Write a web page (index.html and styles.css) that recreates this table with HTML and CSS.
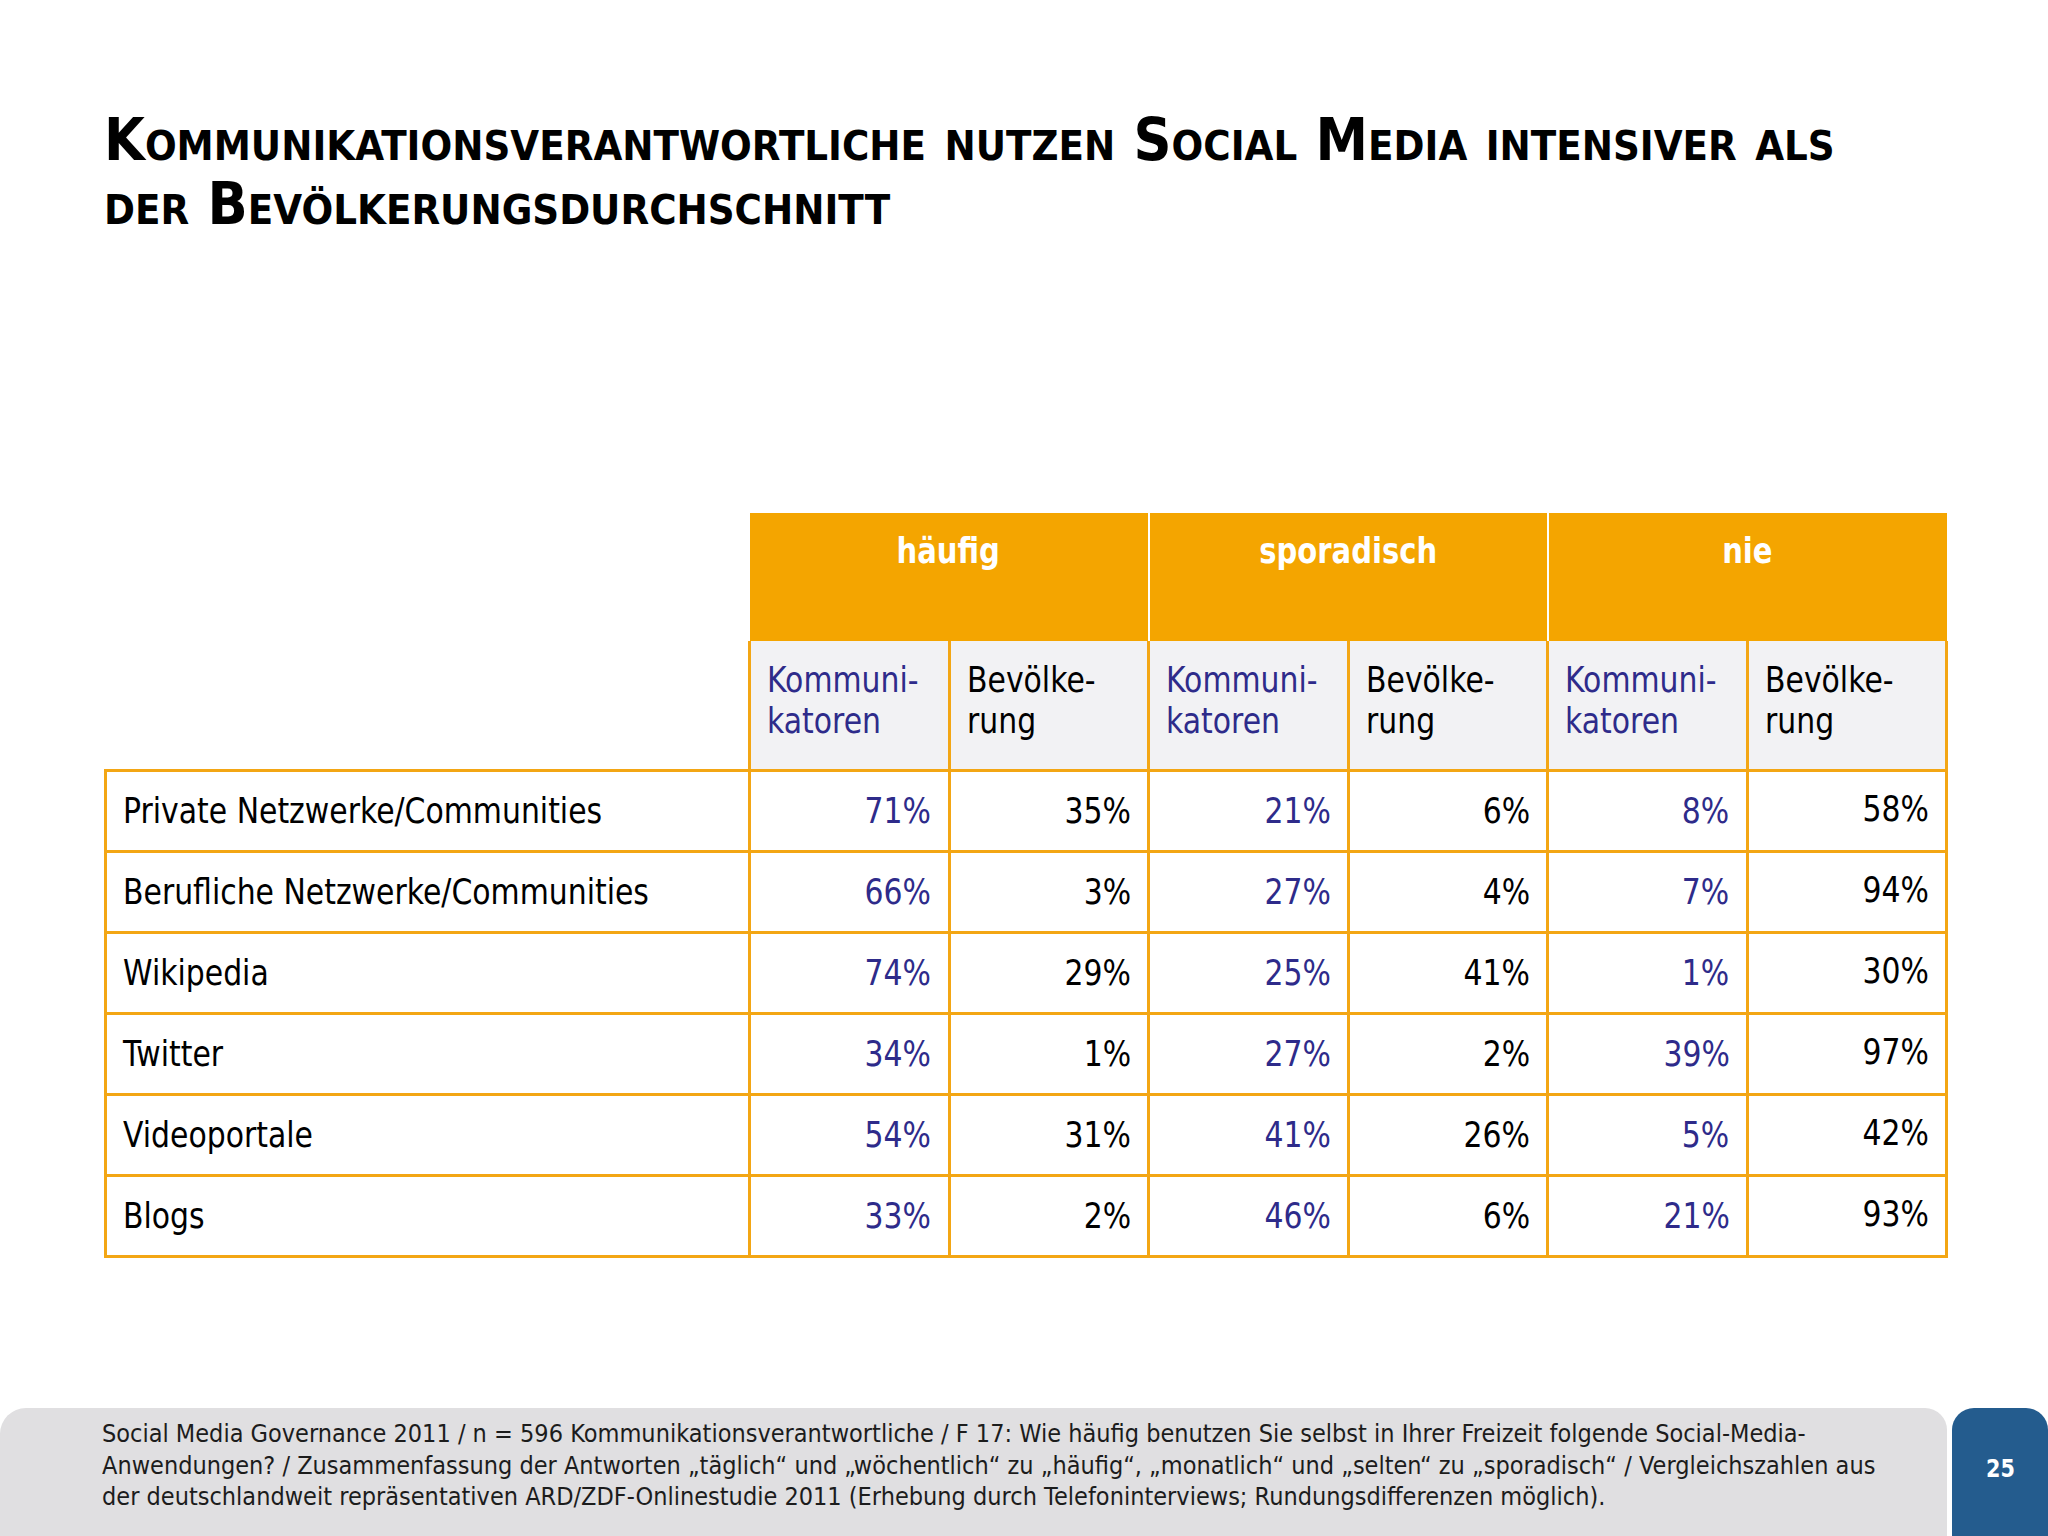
FILE: index.html
```html
<!DOCTYPE html>
<html lang="de">
<head>
<meta charset="utf-8">
<title>Social Media Governance 2011</title>
<link rel="stylesheet" href="styles.css">
</head>
<body>
<div class="slide">
  <h1 class="title">
    <span class="tline">Kommunikationsverantwortliche nutzen Social Media intensiver als</span>
    <span class="tline">der Bevölkerungsdurchschnitt</span>
  </h1>

  <table class="data">
    <colgroup>
      <col class="c-label">
      <col class="c-val"><col class="c-val"><col class="c-val"><col class="c-val"><col class="c-val"><col class="c-val">
    </colgroup>
    <thead>
      <tr class="grp-row">
        <th class="blank"></th>
        <th class="grp" colspan="2"><span class="sq">häufig</span></th>
        <th class="grp" colspan="2"><span class="sq">sporadisch</span></th>
        <th class="grp" colspan="2"><span class="sq">nie</span></th>
      </tr>
      <tr class="sub-row">
        <th class="blank"></th>
        <th class="sub komm"><span class="sq">Kommuni-<br>katoren</span></th>
        <th class="sub"><span class="sq">Bevölke-<br>rung</span></th>
        <th class="sub komm"><span class="sq">Kommuni-<br>katoren</span></th>
        <th class="sub"><span class="sq">Bevölke-<br>rung</span></th>
        <th class="sub komm"><span class="sq">Kommuni-<br>katoren</span></th>
        <th class="sub"><span class="sq">Bevölke-<br>rung</span></th>
      </tr>
    </thead>
    <tbody>
      <tr>
        <td class="label"><span class="sq">Private Netzwerke/Communities</span></td>
        <td class="num komm"><span class="sq">71%</span></td><td class="num"><span class="sq">35%</span></td>
        <td class="num komm"><span class="sq">21%</span></td><td class="num"><span class="sq">6%</span></td>
        <td class="num komm"><span class="sq">8%</span></td><td class="num last"><span class="sq">58%</span></td>
      </tr>
      <tr>
        <td class="label"><span class="sq">Berufliche Netzwerke/Communities</span></td>
        <td class="num komm"><span class="sq">66%</span></td><td class="num"><span class="sq">3%</span></td>
        <td class="num komm"><span class="sq">27%</span></td><td class="num"><span class="sq">4%</span></td>
        <td class="num komm"><span class="sq">7%</span></td><td class="num last"><span class="sq">94%</span></td>
      </tr>
      <tr>
        <td class="label"><span class="sq">Wikipedia</span></td>
        <td class="num komm"><span class="sq">74%</span></td><td class="num"><span class="sq">29%</span></td>
        <td class="num komm"><span class="sq">25%</span></td><td class="num"><span class="sq">41%</span></td>
        <td class="num komm"><span class="sq">1%</span></td><td class="num last"><span class="sq">30%</span></td>
      </tr>
      <tr>
        <td class="label"><span class="sq">Twitter</span></td>
        <td class="num komm"><span class="sq">34%</span></td><td class="num"><span class="sq">1%</span></td>
        <td class="num komm"><span class="sq">27%</span></td><td class="num"><span class="sq">2%</span></td>
        <td class="num komm"><span class="sq">39%</span></td><td class="num last"><span class="sq">97%</span></td>
      </tr>
      <tr>
        <td class="label"><span class="sq">Videoportale</span></td>
        <td class="num komm"><span class="sq">54%</span></td><td class="num"><span class="sq">31%</span></td>
        <td class="num komm"><span class="sq">41%</span></td><td class="num"><span class="sq">26%</span></td>
        <td class="num komm"><span class="sq">5%</span></td><td class="num last"><span class="sq">42%</span></td>
      </tr>
      <tr>
        <td class="label"><span class="sq">Blogs</span></td>
        <td class="num komm"><span class="sq">33%</span></td><td class="num"><span class="sq">2%</span></td>
        <td class="num komm"><span class="sq">46%</span></td><td class="num"><span class="sq">6%</span></td>
        <td class="num komm"><span class="sq">21%</span></td><td class="num last"><span class="sq">93%</span></td>
      </tr>
    </tbody>
  </table>

  <footer class="footer">
    <div class="foot-note">
      <span class="fline">Social Media Governance 2011 / n = 596 Kommunikationsverantwortliche / F 17: Wie häufig benutzen Sie selbst in Ihrer Freizeit folgende Social-Media-</span>
      <span class="fline">Anwendungen? / Zusammenfassung der Antworten „täglich“ und „wöchentlich“ zu „häufig“, „monatlich“ und „selten“ zu „sporadisch“ / Vergleichszahlen aus</span>
      <span class="fline">der deutschlandweit repräsentativen ARD/ZDF-Onlinestudie 2011 (Erhebung durch Telefoninterviews; Rundungsdifferenzen möglich).</span>
    </div>
    <div class="page-no"><span class="sq">25</span></div>
  </footer>
</div>
</body>
</html>
```

FILE: styles.css
```css
* { box-sizing: border-box; }

html, body {
  margin: 0;
  padding: 0;
  background: #ffffff;
}

body {
  font-family: "DejaVu Sans", Verdana, sans-serif;
  color: #000000;
}

.slide {
  width: 2048px;
  height: 1536px;
  display: flex;
  flex-direction: column;
  overflow: hidden;
}

/* the slide text is rendered horizontally condensed */
.sq {
  display: inline-block;
  white-space: nowrap;
  transform: scaleX(0.83);
  transform-origin: left center;
}

/* ---------- title ---------- */
.title {
  margin: 108px 0 0 104px;
  font-size: 58px;
  font-weight: bold;
  font-variant: small-caps;
  line-height: 64px;
}

.tline {
  display: block;
  white-space: nowrap;
  transform: scaleX(0.91);
  transform-origin: left center;
}

/* ---------- table ---------- */
.data {
  margin: 277px 0 0 104px;
  border-collapse: collapse;
  table-layout: fixed;
  width: 1841px;
}

.c-label { width: 644px; }
.c-val { width: 199.5px; }

.blank {
  background: transparent;
  border: none;
  padding: 0;
}

.grp-row { height: 128px; }

.grp {
  background: #f4a500;
  color: #ffffff;
  font-size: 35px;
  font-weight: bold;
  line-height: 40px;
  text-align: center;
  vertical-align: top;
  padding: 18px 0 0;
}

.grp .sq { transform-origin: center center; }

.grp + .grp { border-left: 2px solid #ffffff; }

.sub-row { height: 129px; }

.sub {
  background: #f2f2f4;
  border: 3px solid #f3a614;
  border-top: none;
  font-size: 36px;
  font-weight: normal;
  line-height: 41px;
  text-align: left;
  vertical-align: top;
  padding: 18px 8px 0 16px;
  color: #000000;
}

.komm { color: #2e2b8a; }
.sub.komm { color: #2e2b8a; }

tbody tr { height: 81px; }

tbody td {
  border: 3px solid #f3a614;
  font-size: 36px;
  line-height: 42px;
  padding: 0 16px;
  vertical-align: middle;
  background: #ffffff;
}

.label { text-align: left; }

.num { text-align: right; }
.num .sq { transform-origin: right center; }
.num.last { padding-bottom: 4px; }

/* ---------- footer ---------- */
.footer {
  margin-top: auto;
  height: 128px;
  display: flex;
  gap: 5px;
}

.foot-note {
  flex: 1 1 auto;
  min-width: 0;
  overflow: hidden;
  background: #e0dfe1;
  border-radius: 26px 22px 0 0;
  padding: 10px 0 0 102px;
  font-size: 25px;
  line-height: 31.5px;
  color: #1c1c1c;
}

.fline {
  display: block;
  white-space: nowrap;
  transform: scaleX(0.9);
  transform-origin: left center;
}

.page-no {
  flex: 0 0 96px;
  width: 96px;
  background: #245c8e;
  border-radius: 22px 22px 0 0;
  color: #ffffff;
  font-size: 25px;
  font-weight: bold;
  display: flex;
  align-items: center;
  justify-content: center;
  padding-bottom: 8px;
}

.page-no .sq { transform-origin: center center; }
```
